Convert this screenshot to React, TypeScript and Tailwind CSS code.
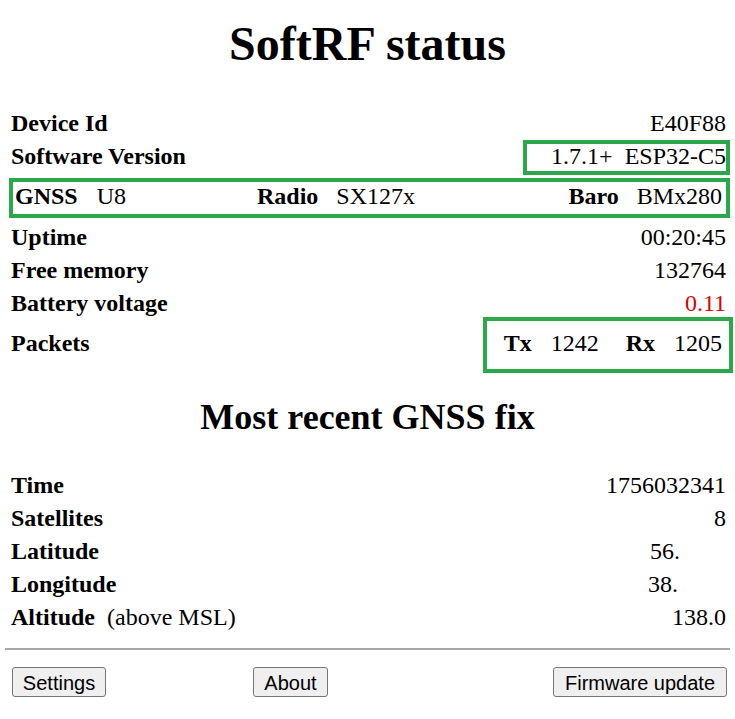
const serif = { fontFamily: '"Liberation Serif", "Times New Roman", serif' };

function Row({
  label,
  value,
  extra,
  className = '',
  children,
}: {
  label: string;
  value?: React.ReactNode;
  extra?: string;
  className?: string;
  children?: React.ReactNode;
}) {
  return (
    <div className={`relative flex h-[33px] items-center justify-between leading-[33px] ${className}`}>
      <div className="flex">
        <span className="font-bold">{label}</span>
        {extra && <span className="ml-[12px]">{extra}</span>}
      </div>
      {value}
      {children}
    </div>
  );
}

function Highlight({ className }: { className: string }) {
  return <span className={`pointer-events-none absolute border-4 border-[#2ba84a] ${className}`} />;
}

export default function App() {
  return (
    <div className="min-h-[719px] bg-white text-black text-[24px]" style={serif}>
      <h1 className="pt-[20px] text-center text-[48px] font-bold leading-[48px]">SoftRF status</h1>

      <div className="mt-[39px] pl-[11px] pr-[9px]">
        <Row label="Device Id" value={<span>E40F88</span>} />
        <Row
          label="Software Version"
          value={
            <span className="flex gap-[12px]">
              <span>1.7.1+</span>
              <span>ESP32-C5</span>
            </span>
          }
        >
          <Highlight className="left-[512px] right-[-4px] top-0 bottom-[-2px]" />
        </Row>

        <div className="relative mt-[7px] grid h-[33px] grid-cols-[242px_1fr_auto] items-center pl-[4px] pr-[4px] leading-[33px]">
          <div className="flex gap-[19px]">
            <span className="font-bold">GNSS</span>
            <span>U8</span>
          </div>
          <div className="flex gap-[18px]">
            <span className="font-bold">Radio</span>
            <span>SX127x</span>
          </div>
          <div className="flex gap-[18px]">
            <span className="font-bold">Baro</span>
            <span>BMx280</span>
          </div>
          <Highlight className="left-[-2px] right-[-4px] top-[-2px] bottom-[-5px]" />
        </div>

        <Row label="Uptime" value={<span>00:20:45</span>} className="mt-[8px]" />
        <Row label="Free memory" value={<span>132764</span>} />
        <Row label="Battery voltage" value={<span className="text-[#e00000]">0.11</span>} />
        <Row
          label="Packets"
          className="mt-[7px]"
          value={
            <span className="flex pr-[4px]">
              <span className="font-bold">Tx</span>
              <span className="ml-[19px]">1242</span>
              <span className="ml-[27px] font-bold">Rx</span>
              <span className="ml-[19px]">1205</span>
            </span>
          }
        >
          <Highlight className="left-[472px] right-[-7px] top-[-10px] bottom-[-13px]" />
        </Row>
      </div>

      <h2 className="mt-[39px] text-center text-[36px] font-bold leading-[36px]">Most recent GNSS fix</h2>

      <div className="mt-[34px] pl-[11px] pr-[9px]">
        <Row label="Time" value={<span>1756032341</span>} />
        <Row label="Satellites" value={<span>8</span>} />
        <Row label="Latitude" value={<span className="pr-[46px]">56.</span>} />
        <Row label="Longitude" value={<span className="pr-[48px]">38.</span>} />
        <Row label="Altitude" extra="(above MSL)" value={<span>138.0</span>} />
      </div>

      <div className="mt-[14px] px-[5px]">
        <hr className="border-0 border-t-2 border-[#a8a8a8]" />
      </div>

      <div
        className="mt-[17px] flex pl-[12px] pr-[8px] text-[20px]"
        style={{ fontFamily: '"Liberation Sans", Arial, sans-serif' }}
      >
        <button className="h-[30px] w-[94px] rounded-[3px] border border-[#767676] bg-[#efefef] text-center">
          Settings
        </button>
        <button className="ml-[147px] h-[30px] w-[75px] rounded-[3px] border border-[#767676] bg-[#efefef] text-center">
          About
        </button>
        <button className="ml-auto h-[30px] w-[174px] rounded-[3px] border border-[#767676] bg-[#efefef] text-center">
          Firmware update
        </button>
      </div>
    </div>
  );
}
